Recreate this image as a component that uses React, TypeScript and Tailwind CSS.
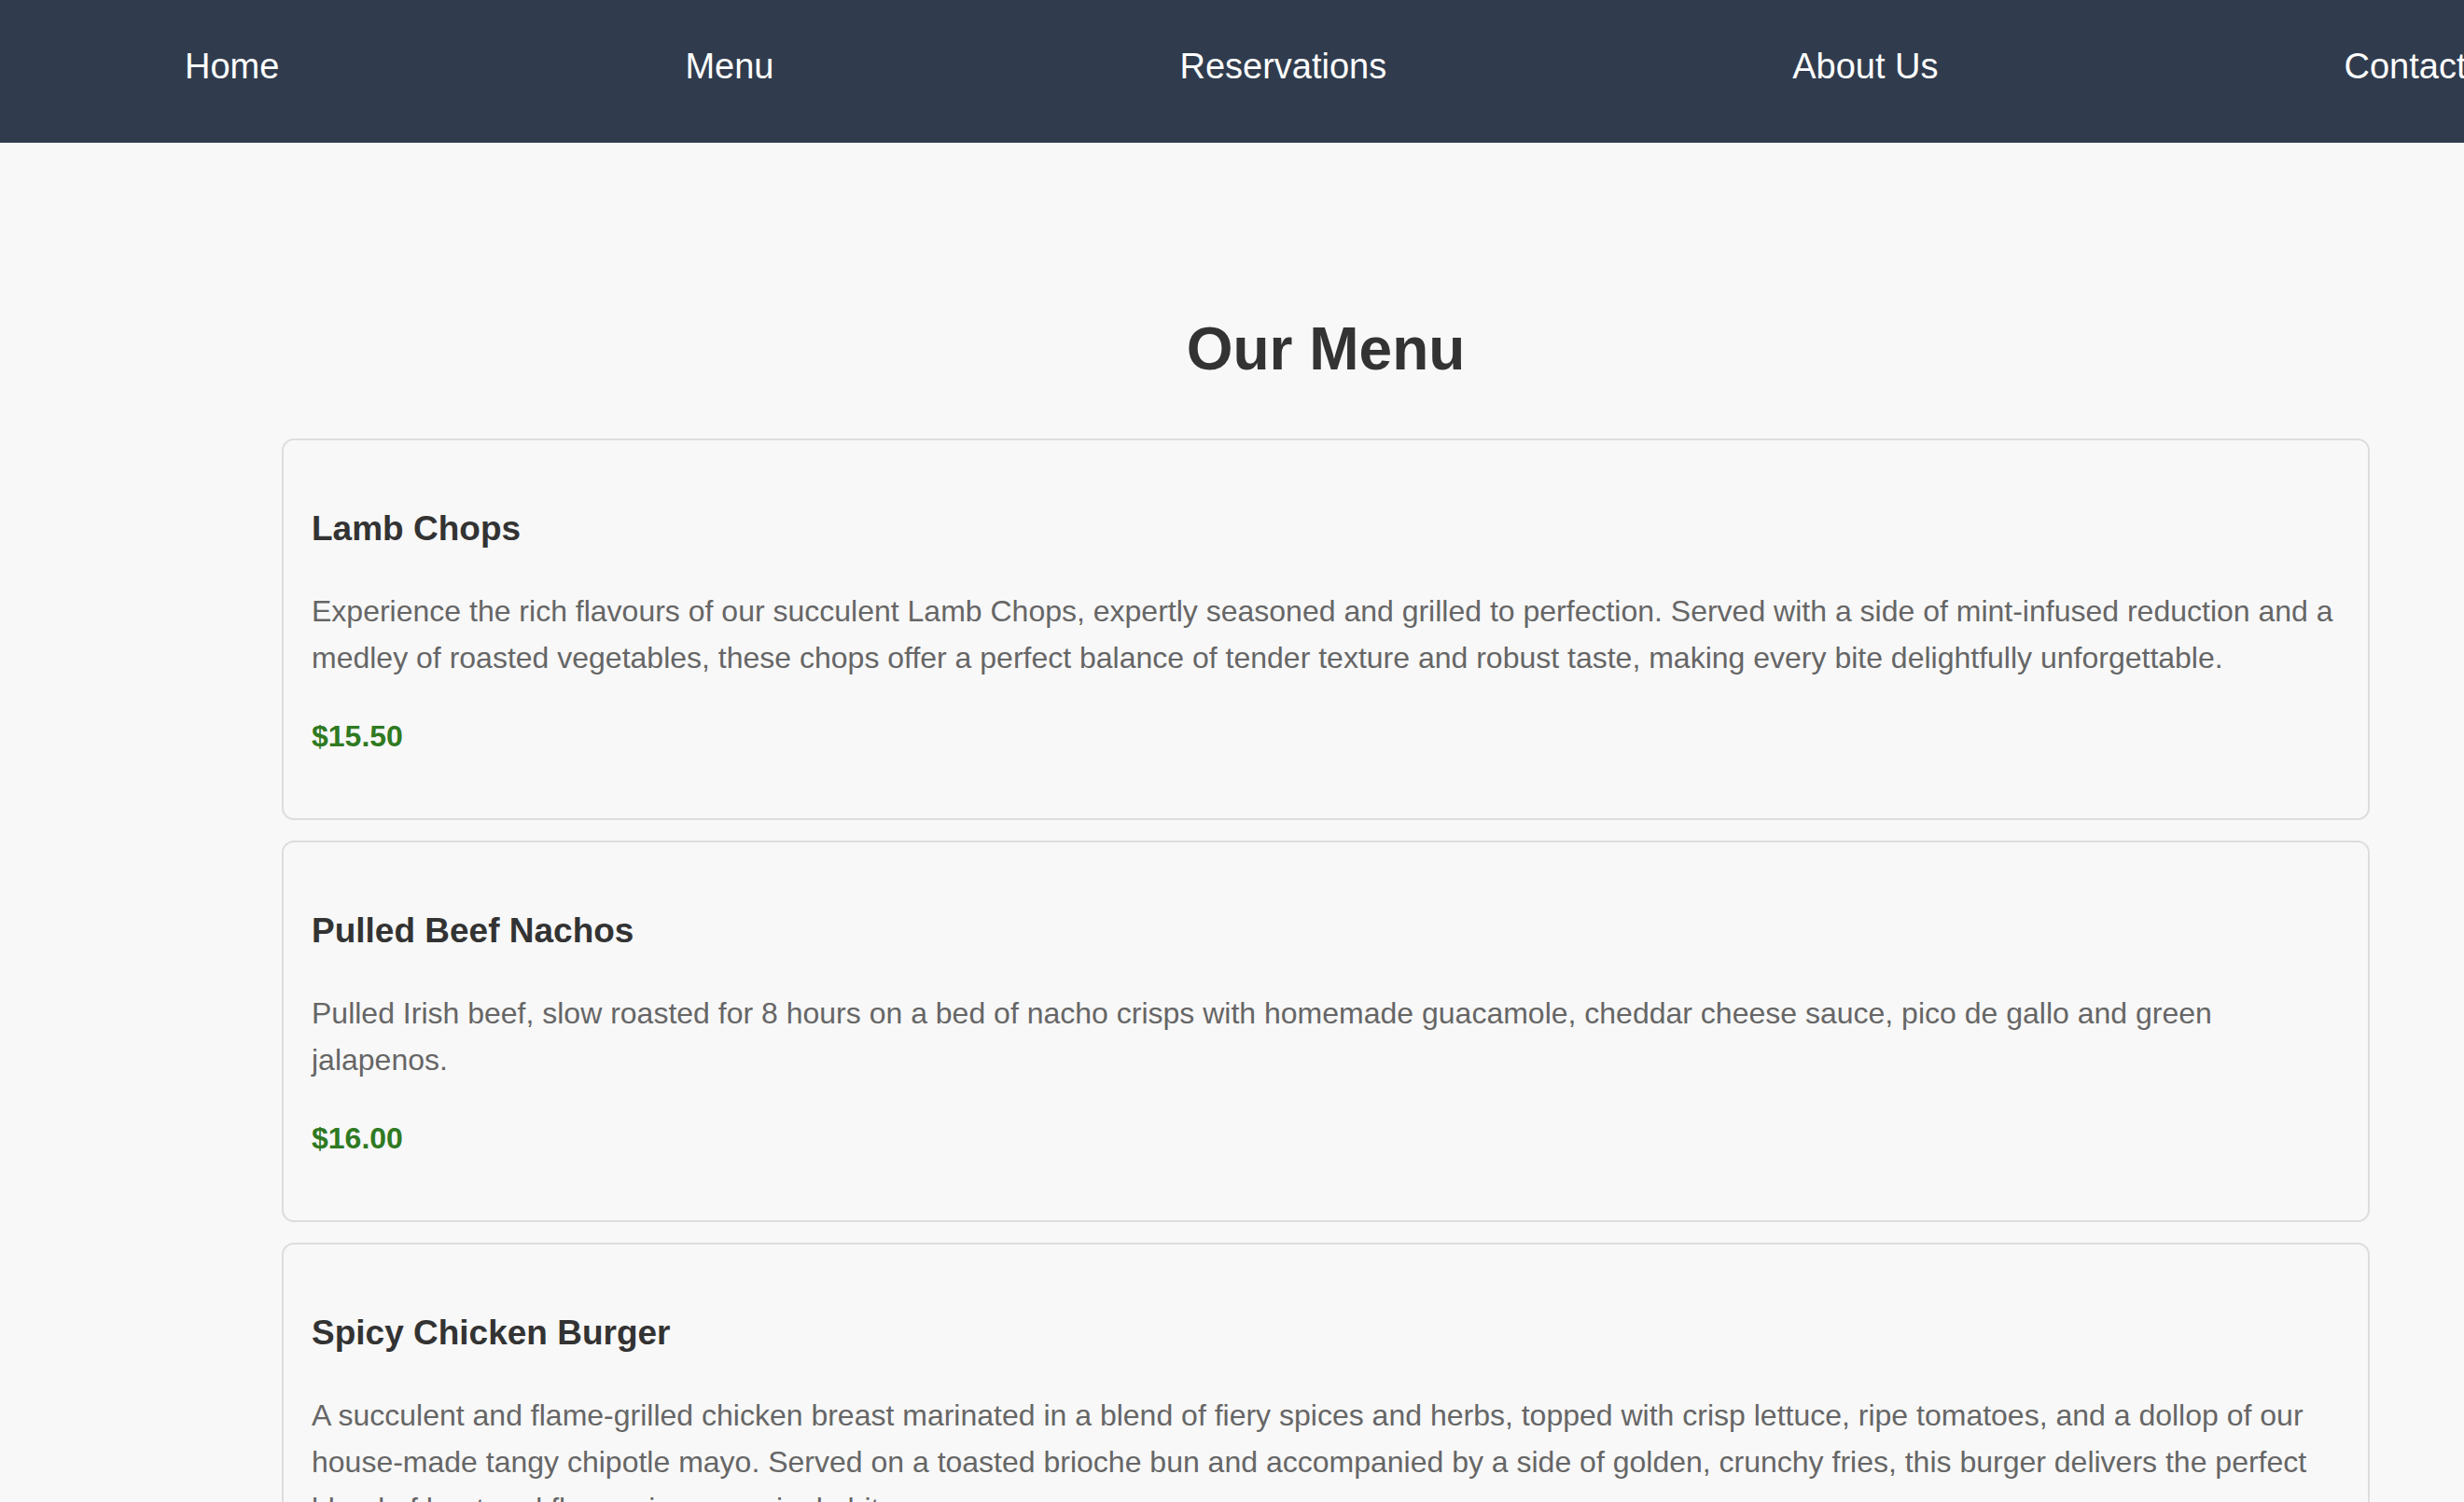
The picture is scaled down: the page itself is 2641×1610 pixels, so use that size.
import React from "react";

const items = [
  {
    name: "Lamb Chops",
    desc: "Experience the rich flavours of our succulent Lamb Chops, expertly seasoned and grilled to perfection. Served with a side of mint-infused reduction and a medley of roasted vegetables, these chops offer a perfect balance of tender texture and robust taste, making every bite delightfully unforgettable.",
    price: "$15.50",
  },
  {
    name: "Pulled Beef Nachos",
    desc: "Pulled Irish beef, slow roasted for 8 hours on a bed of nacho crisps with homemade guacamole, cheddar cheese sauce, pico de gallo and green jalapenos.",
    price: "$16.00",
  },
  {
    name: "Spicy Chicken Burger",
    desc: "A succulent and flame-grilled chicken breast marinated in a blend of fiery spices and herbs, topped with crisp lettuce, ripe tomatoes, and a dollop of our house-made tangy chipotle mayo. Served on a toasted brioche bun and accompanied by a side of golden, crunchy fries, this burger delivers the perfect blend of heat and flavour in every single bite.",
    price: "$14.00",
  },
];

export default function App() {
  return (
    <div
      className="min-h-screen w-full overflow-hidden bg-[#f8f8f8]"
      style={{ fontFamily: '"Liberation Sans", Arial, sans-serif' }}
    >
      <nav className="flex h-[153px] items-start gap-[435px] overflow-hidden whitespace-nowrap bg-[#303c4e] pl-[198px] pt-[49px]">
        {["Home", "Menu", "Reservations", "About Us", "Contact"].map((t) => (
          <span key={t} className="text-[38px] leading-[44px] text-white">
            {t}
          </span>
        ))}
      </nav>
      <main className="ml-[302px] w-[2238px]">
        <h1 className="mt-[184px] mb-[59px] text-center text-[64px] font-bold leading-[74px] text-[#333333]">
          Our Menu
        </h1>
        <div className="flex flex-col gap-[22px]">
          {items.map((it) => (
            <div
              key={it.name}
              className="rounded-[13px] border-2 border-[#dddddd] px-[30px] pt-[73px] pb-[63px]"
            >
              <h3 className="text-[37px] font-bold leading-[44px] text-[#333333]">
                {it.name}
              </h3>
              <p className="mt-[41px] text-[32px] leading-[50px] text-[#666666]">
                {it.desc}
              </p>
              <p className="mt-[34px] text-[32px] font-bold leading-[50px] text-[#2f7a22]">
                {it.price}
              </p>
            </div>
          ))}
        </div>
      </main>
    </div>
  );
}
